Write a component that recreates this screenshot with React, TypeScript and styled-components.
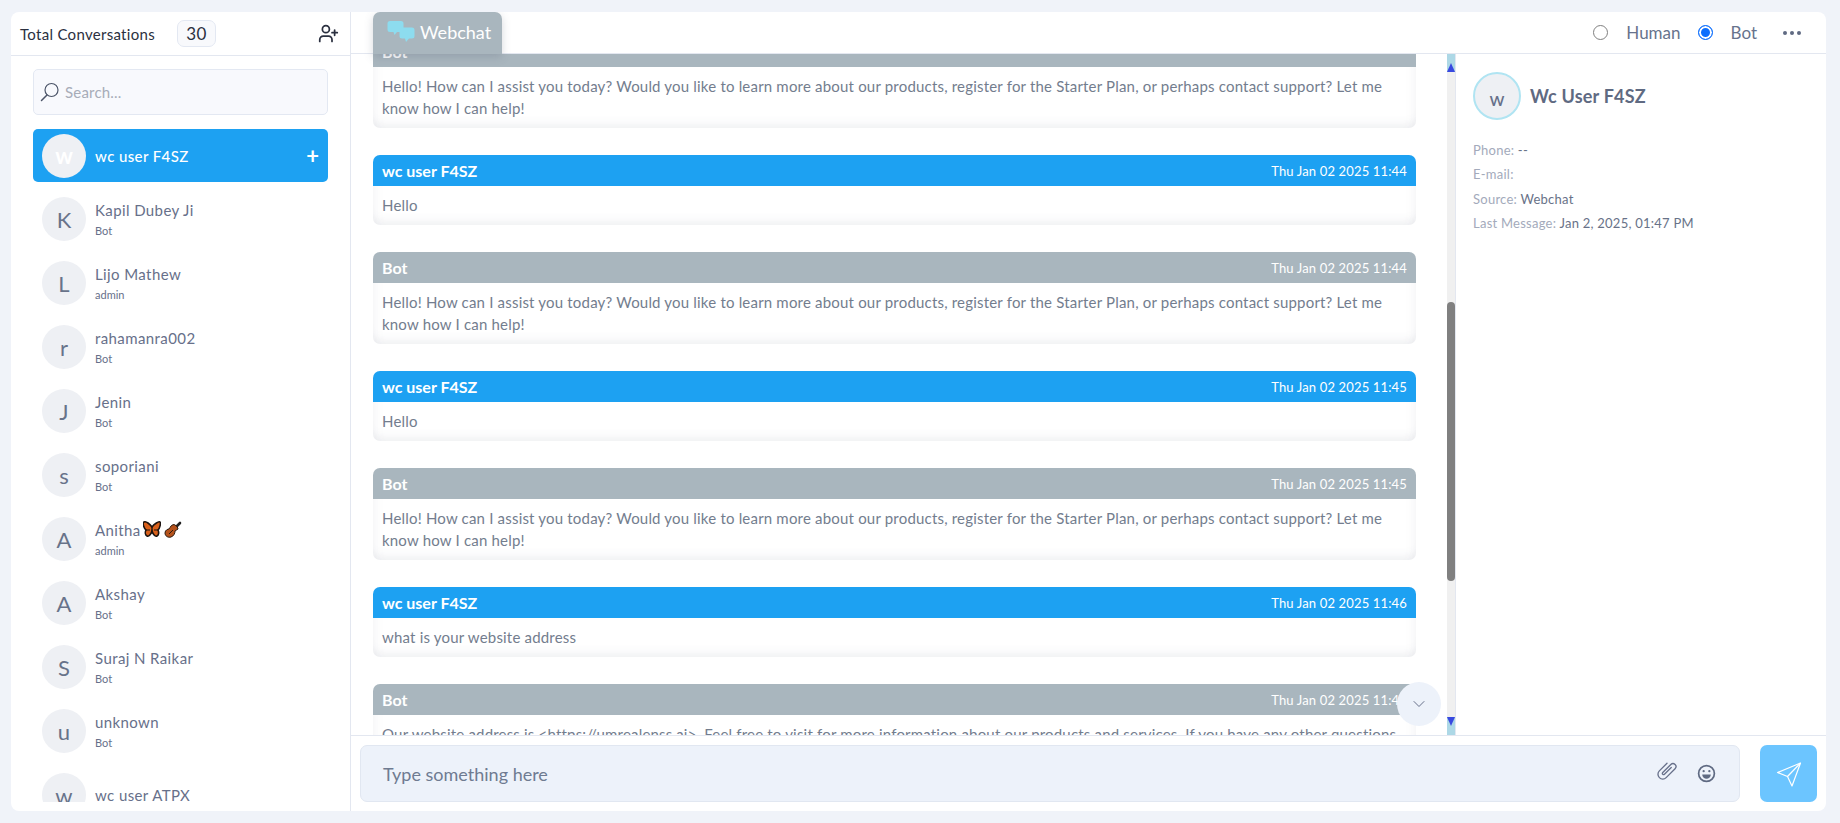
import styled, { createGlobalStyle } from "styled-components";
import { ChevronDown, UserPlus } from "lucide-react";

const GlobalStyle = createGlobalStyle`
  * {
    box-sizing: border-box;
  }
  html, body {
    margin: 0;
    height: 100%;
    background-color: #f0f3f9;
    font-family: "Lato", "Open Sans", sans-serif;
    overflow: hidden;
  }
`;

const Page = styled.div`
  width: 1840px;
  height: 823px;
  padding: 12px 14px 12px 11px;
`;

const Card = styled.div`
  width: 100%;
  height: 100%;
  background-color: #fff;
  border-radius: 8px;
  display: flex;
  overflow: hidden;
`;

const Sidebar = styled.aside`
  width: 340px;
  flex-shrink: 0;
  border-right: 1px solid #e3e7f0;
  display: flex;
  flex-direction: column;
`;

const SidebarHeader = styled.div`
  height: 44px;
  flex-shrink: 0;
  border-bottom: 1px solid #e3e7f0;
  display: flex;
  align-items: center;
  padding: 0 11px 0 9px;
  color: #2b3040;
  font-size: 15px;
  letter-spacing: 0.3px;
`;

const CountBadge = styled.span`
  width: 39px;
  height: 27px;
  margin-left: 22px;
  border: 1px solid #e3e8f2;
  border-radius: 7px;
  background-color: #f8f9fc;
  display: flex;
  align-items: center;
  justify-content: center;
  font-size: 17px;
`;

const HeaderAction = styled.span`
  margin-left: auto;
  display: flex;
`;

const SearchBox = styled.div`
  height: 46px;
  margin: 13px 22px 14px;
  flex-shrink: 0;
  border: 1px solid #e3e8f2;
  border-radius: 5px;
  background-color: #f8f9fd;
  display: flex;
  align-items: center;
  gap: 5px;
  padding: 0 6px;
  color: #a7acb8;
  font-size: 15px;
  letter-spacing: 0.2px;
`;

const ConversationList = styled.div`
  height: 673px;
  padding: 0 22px;
  overflow: hidden;
`;

const Conversation = styled.div<{ $active?: boolean }>`
  height: ${(p) => (p.$active ? "53px" : "64px")};
  margin-bottom: ${(p) => (p.$active ? "5px" : "0")};
  padding: ${(p) => (p.$active ? "4px 9px" : "10px 9px")};
  display: flex;
  align-items: ${(p) => (p.$active ? "center" : "flex-start")};
  gap: 9px;
  border-radius: 5px;
  background-color: ${(p) => (p.$active ? "#1da1f2" : "transparent")};
`;

const Avatar = styled.div<{ $active?: boolean }>`
  width: 44px;
  height: 44px;
  flex-shrink: 0;
  border-radius: 50%;
  background-color: #eef0f4;
  display: flex;
  align-items: center;
  justify-content: center;
  color: ${(p) => (p.$active ? "#fff" : "#68738a")};
  font-size: 22px;
  font-weight: ${(p) => (p.$active ? 700 : 400)};
`;

const ConversationText = styled.div`
  min-width: 0;
  height: 44px;
  flex: 1;
  display: flex;
  flex-direction: column;
  justify-content: center;
  gap: 5px;
`;

const ConversationName = styled.div<{ $active?: boolean }>`
  display: flex;
  align-items: center;
  height: 18px;
  color: ${(p) => (p.$active ? "#fff" : "#67708a")};
  font-size: 15px;
  font-weight: ${(p) => (p.$active ? 500 : 400)};
  letter-spacing: 0.4px;
`;

const ConversationRole = styled.div`
  color: #67708a;
  font-size: 11px;
  line-height: 14px;
`;

const PlusSign = styled.span`
  margin-left: auto;
  color: #fff;
  font-size: 22px;
  font-weight: 700;
  line-height: 1;
`;

const Main = styled.main`
  flex: 1;
  min-width: 0;
  display: flex;
  flex-direction: column;
  position: relative;
`;

const TopBar = styled.div`
  height: 42px;
  flex-shrink: 0;
  border-bottom: 1px solid #e3e7f0;
  display: flex;
  align-items: center;
  justify-content: space-between;
  padding: 0 24px 0 22px;
`;

const ChannelTab = styled.div`
  width: 129px;
  height: 42px;
  position: relative;
  z-index: 2;
  border-radius: 7px 7px 0 0;
  background-color: #a9b6be;
  box-shadow: 0 3px 8px rgba(90, 100, 120, 0.25);
  display: flex;
  align-items: center;
  gap: 5px;
  padding: 0 0 1px 14px;
  color: #fff;
  font-size: 18px;
`;

const ModeGroup = styled.div`
  display: flex;
  align-items: center;
  color: #67738d;
  font-size: 17px;
`;

const RadioDot = styled.span<{ $checked?: boolean }>`
  width: 15px;
  height: 15px;
  margin: 0 18px 0 ${(p) => (p.$checked ? "17px" : "0")};
  border-radius: 50%;
  border: ${(p) => (p.$checked ? "1.5px solid #0d6efd" : "1.5px solid #808080")};
  background-color: ${(p) => (p.$checked ? "#0d6efd" : "#fff")};
  box-shadow: ${(p) => (p.$checked ? "inset 0 0 0 2px #fff" : "none")};
`;

const MoreDots = styled.span`
  margin-left: 25px;
  display: flex;
`;

const Middle = styled.div`
  flex: 1;
  min-height: 0;
  display: flex;
`;

const ChatPane = styled.div`
  flex: 1;
  min-width: 0;
  position: relative;
  overflow: hidden;
  padding: 0 32px 0 22px;
`;

const MessageStack = styled.div`
  margin-top: -18px;
  display: flex;
  flex-direction: column;
  gap: 27px;
`;

const Message = styled.div`
  border-radius: 7px;
  box-shadow: inset 0 -12px 10px -8px rgba(110, 120, 140, 0.1),
    inset 12px 0 10px -10px rgba(110, 120, 140, 0.08),
    inset -12px 0 10px -10px rgba(110, 120, 140, 0.08);
  overflow: hidden;
`;

const MessageHeader = styled.div<{ $bot?: boolean }>`
  height: 31px;
  display: flex;
  align-items: center;
  justify-content: space-between;
  padding: 0 9px;
  background-color: ${(p) => (p.$bot ? "#a9b6be" : "#1da1f2")};
  color: #fff;
`;

const SenderName = styled.span`
  font-size: 16px;
  font-weight: 700;
`;

const MessageTime = styled.span`
  font-size: 13px;
  letter-spacing: 0.15px;
`;

const MessageBody = styled.div`
  padding: 8px 9px 9px;
  color: #737d8e;
  font-size: 15px;
  letter-spacing: 0.19px;
  line-height: 22px;
`;

const ScrollTrack = styled.div`
  width: 8px;
  flex-shrink: 0;
  margin-left: -1px;
  background-color: #f0f0f0;
  display: flex;
  flex-direction: column;
`;

const ScrollArrow = styled.div<{ $down?: boolean }>`
  height: 18px;
  background-color: #add8e6;
  display: flex;
  align-items: ${(p) => (p.$down ? "flex-start" : "flex-end")};
  justify-content: center;
  &::after {
    content: "";
    border-left: 4px solid transparent;
    border-right: 4px solid transparent;
    border-bottom: ${(p) => (p.$down ? "0" : "9px solid #3949e0")};
    border-top: ${(p) => (p.$down ? "9px solid #3949e0" : "0")};
  }
`;

const ScrollThumb = styled.div`
  height: 279px;
  margin-top: 230px;
  margin-bottom: auto;
  background-color: #808080;
  border-radius: 4px;
`;

const JumpButton = styled.button`
  position: absolute;
  right: 7px;
  bottom: 9px;
  width: 44px;
  height: 44px;
  padding: 0;
  border: 0;
  border-radius: 50%;
  background-color: #edf2fa;
  display: flex;
  align-items: center;
  justify-content: center;
`;

const DetailsPanel = styled.div`
  width: 371px;
  flex-shrink: 0;
  border-left: 1px solid #e3e7f0;
  padding: 18px 17px;
`;

const ContactHead = styled.div`
  display: flex;
  align-items: center;
  gap: 9px;
  margin-bottom: 18px;
`;

const ContactAvatar = styled.div`
  width: 48px;
  height: 48px;
  border: 2px solid #b0e4f2;
  border-radius: 50%;
  background-color: #eef0f4;
  display: flex;
  align-items: center;
  justify-content: center;
  padding-top: 4px;
  color: #67708a;
  font-size: 19px;
  font-weight: 500;
`;

const ContactName = styled.div`
  color: #5f6a82;
  font-size: 18px;
  font-weight: 700;
  letter-spacing: 0.2px;
`;

const DetailLine = styled.div`
  height: 24.3px;
  color: #a3aabb;
  font-size: 13px;
  letter-spacing: 0.25px;
  line-height: 24.3px;
  span {
    color: #687288;
  }
`;

const Composer = styled.div`
  height: 76px;
  flex-shrink: 0;
  border-top: 1px solid #e3e7f0;
  display: flex;
  gap: 20px;
  padding: 9px;
`;

const InputBox = styled.div`
  flex: 1;
  height: 57px;
  border: 1px solid #e1e7f1;
  border-radius: 7px;
  background-color: #edf2fa;
  display: flex;
  align-items: center;
  padding: 0 23px 0 22px;
  color: #6f7b91;
  font-size: 18px;
`;

const ComposerIcons = styled.div`
  margin-left: auto;
  display: flex;
  align-items: center;
  gap: 18px;
`;

const ClipIcon = styled.svg`
  margin-bottom: 7px;
`;

const SendButton = styled.button`
  width: 57px;
  height: 57px;
  padding: 0;
  border: 0;
  border-radius: 7px;
  background-color: #6cc5ff;
  display: flex;
  align-items: center;
  justify-content: center;
`;

const ButterflyIcon = styled.svg`
  margin-left: 2px;
`;

const ViolinIcon = styled.svg`
  margin-left: 3px;
`;

const GREETING =
  "Hello! How can I assist you today? Would you like to learn more about our products, register for the Starter Plan, or perhaps contact support? Let me know how I can help!";

const conversations = [
  { name: "Kapil Dubey Ji", role: "Bot" },
  { name: "Lijo Mathew", role: "admin" },
  { name: "rahamanra002", role: "Bot" },
  { name: "Jenin", role: "Bot" },
  { name: "soporiani", role: "Bot" },
  { name: "Anitha", role: "admin", emoji: true },
  { name: "Akshay", role: "Bot" },
  { name: "Suraj N Raikar", role: "Bot" },
  { name: "unknown", role: "Bot" },
  { name: "wc user ATPX", role: "" },
];

const messages = [
  { bot: true, time: "", text: GREETING },
  { bot: false, time: "Thu Jan 02 2025 11:44", text: "Hello" },
  { bot: true, time: "Thu Jan 02 2025 11:44", text: GREETING },
  { bot: false, time: "Thu Jan 02 2025 11:45", text: "Hello" },
  { bot: true, time: "Thu Jan 02 2025 11:45", text: GREETING },
  { bot: false, time: "Thu Jan 02 2025 11:46", text: "what is your website address" },
  {
    bot: true,
    time: "Thu Jan 02 2025 11:46",
    text: "Our website address is <https://umrealenss.ai>. Feel free to visit for more information about our products and services. If you have any other questions",
  },
];

function SearchIcon() {
  return (
    <svg width="20" height="20" viewBox="0 0 20 20" fill="none" stroke="#4b5468" strokeWidth="1.2">
      <circle cx="11.5" cy="8" r="6.5" />
      <path d="M7 13 L1.5 18.5" strokeWidth="1.5" strokeLinecap="round" />
    </svg>
  );
}

function ChatBubbles() {
  return (
    <svg width="28" height="22" viewBox="0 0 28 22" fill="#8ddcef">
      <path d="M3 0h11a2.500 2.500 0 0 1 2.500 2.500v6a2.500 2.500 0 0 1-2.500 2.500H10l-2.500 3-1-3H3A2.500 2.500 0 0 1 .5 8.500v-6A2.500 2.500 0 0 1 3 0z" />
      <path d="M15 6.500h10a2.500 2.500 0 0 1 2.500 2.500v6a2.500 2.500 0 0 1-2.500 2.500h-3l-3 3.500-1-3.500h-3a2.500 2.500 0 0 1-2.500-2.500V9A2.500 2.500 0 0 1 15 6.500z" />
    </svg>
  );
}

function Butterfly() {
  return (
    <ButterflyIcon width="18" height="17" viewBox="0 0 18 17">
      <path d="M9 6C7 3 3 0 1 1S1 7 3 9c-1 2-1 5 1 6s4-2 5-5c1 3 3 6 5 5s2-4 1-6c2-2 3-7 2-8s-6 2-8 5z" fill="#d9601a" stroke="#1c1410" strokeWidth="1.600" />
      <path d="M9 5v8M3 9h4M15 9h-4" stroke="#1c1410" strokeWidth="1.200" />
    </ButterflyIcon>
  );
}

function Violin() {
  return (
    <ViolinIcon width="18" height="18" viewBox="0 0 18 18">
      <path d="M12 6l4-4" stroke="#222" strokeWidth="2.600" strokeLinecap="round" />
      <path d="M11 4c2 1 3 3 3 4-1 1-2 1-3 2 0 2-1 5-4 6S1 15 1 12s3-4 4-4c1-1 1-2 2-3s3-2 4-1z" fill="#b5521b" stroke="#2a1a10" strokeWidth="1" />
      <path d="M5 13l4-4" stroke="#2a1a10" strokeWidth="1" />
    </ViolinIcon>
  );
}

function AttachIcon() {
  return (
    <ClipIcon width="24" height="24" viewBox="0 0 20 20" fill="none" stroke="#67708a" strokeWidth="1.100" strokeLinecap="round">
      <path transform="rotate(45 10 10)" d="M6 6v9a4 4 0 0 0 8 0V4.500a2.500 2.500 0 0 0-5 0V14a1 1 0 0 0 2 0V6" />
    </ClipIcon>
  );
}

function SmileIcon() {
  return (
    <svg width="19" height="19" viewBox="0 0 20 20" fill="none" stroke="#5f6a82" strokeWidth="1.800">
      <circle cx="10" cy="10" r="8.300" />
      <circle cx="7" cy="7.500" r="1.200" fill="#5f6a82" stroke="none" />
      <circle cx="13" cy="7.500" r="1.200" fill="#5f6a82" stroke="none" />
      <path d="M5.500 11h9a4.500 4.500 0 0 1-9 0z" fill="#5f6a82" stroke="none" />
    </svg>
  );
}

function SendIcon() {
  return (
    <svg width="26" height="26" viewBox="0 0 26 26" fill="none" stroke="#fff" strokeWidth="1.200" strokeLinejoin="round">
      <path d="M1.500 11.500L24.500 2L16 25L11.500 15.500z" />
      <path d="M11.500 15.500L24.500 2" />
    </svg>
  );
}

function ThreeDots() {
  return (
    <svg width="20" height="6" viewBox="0 0 20 6" fill="#5f6a82">
      <circle cx="3" cy="3" r="2" />
      <circle cx="10" cy="3" r="2" />
      <circle cx="17" cy="3" r="2" />
    </svg>
  );
}

export default function App() {
  return (
    <>
      <GlobalStyle />
      <Page>
        <Card>
          <Sidebar>
            <SidebarHeader>
              Total Conversations
              <CountBadge>30</CountBadge>
              <HeaderAction>
                <UserPlus size={21} color="#2b3040" strokeWidth={2} />
              </HeaderAction>
            </SidebarHeader>
            <SearchBox>
              <SearchIcon />
              Search...
            </SearchBox>
            <ConversationList>
              <Conversation $active>
                <Avatar $active>w</Avatar>
                <ConversationName $active>wc user F4SZ</ConversationName>
                <PlusSign>+</PlusSign>
              </Conversation>
              {conversations.map((item) => (
                <Conversation key={item.name}>
                  <Avatar>{item.name[0]}</Avatar>
                  <ConversationText>
                    <ConversationName>
                      {item.name}
                      {item.emoji && (
                        <>
                          <Butterfly />
                          <Violin />
                        </>
                      )}
                    </ConversationName>
                    {item.role && <ConversationRole>{item.role}</ConversationRole>}
                  </ConversationText>
                </Conversation>
              ))}
            </ConversationList>
          </Sidebar>
          <Main>
            <TopBar>
              <ChannelTab>
                <ChatBubbles />
                Webchat
              </ChannelTab>
              <ModeGroup>
                <RadioDot />
                Human
                <RadioDot $checked />
                Bot
                <MoreDots>
                  <ThreeDots />
                </MoreDots>
              </ModeGroup>
            </TopBar>
            <Middle>
              <ChatPane>
                <MessageStack>
                  {messages.map((msg, index) => (
                    <Message key={index}>
                      <MessageHeader $bot={msg.bot}>
                        <SenderName>{msg.bot ? "Bot" : "wc user F4SZ"}</SenderName>
                        <MessageTime>{msg.time}</MessageTime>
                      </MessageHeader>
                      <MessageBody>{msg.text}</MessageBody>
                    </Message>
                  ))}
                </MessageStack>
                <JumpButton>
                  <ChevronDown size={20} color="#67708a" strokeWidth={1.2} />
                </JumpButton>
              </ChatPane>
              <ScrollTrack>
                <ScrollArrow />
                <ScrollThumb />
                <ScrollArrow $down />
              </ScrollTrack>
              <DetailsPanel>
                <ContactHead>
                  <ContactAvatar>w</ContactAvatar>
                  <ContactName>Wc User F4SZ</ContactName>
                </ContactHead>
                <DetailLine>
                  Phone: <span>--</span>
                </DetailLine>
                <DetailLine>E-mail:</DetailLine>
                <DetailLine>
                  Source: <span>Webchat</span>
                </DetailLine>
                <DetailLine>
                  Last Message: <span>Jan 2, 2025, 01:47 PM</span>
                </DetailLine>
              </DetailsPanel>
            </Middle>
            <Composer>
              <InputBox>
                Type something here
                <ComposerIcons>
                  <AttachIcon />
                  <SmileIcon />
                </ComposerIcons>
              </InputBox>
              <SendButton>
                <SendIcon />
              </SendButton>
            </Composer>
          </Main>
        </Card>
      </Page>
    </>
  );
}
